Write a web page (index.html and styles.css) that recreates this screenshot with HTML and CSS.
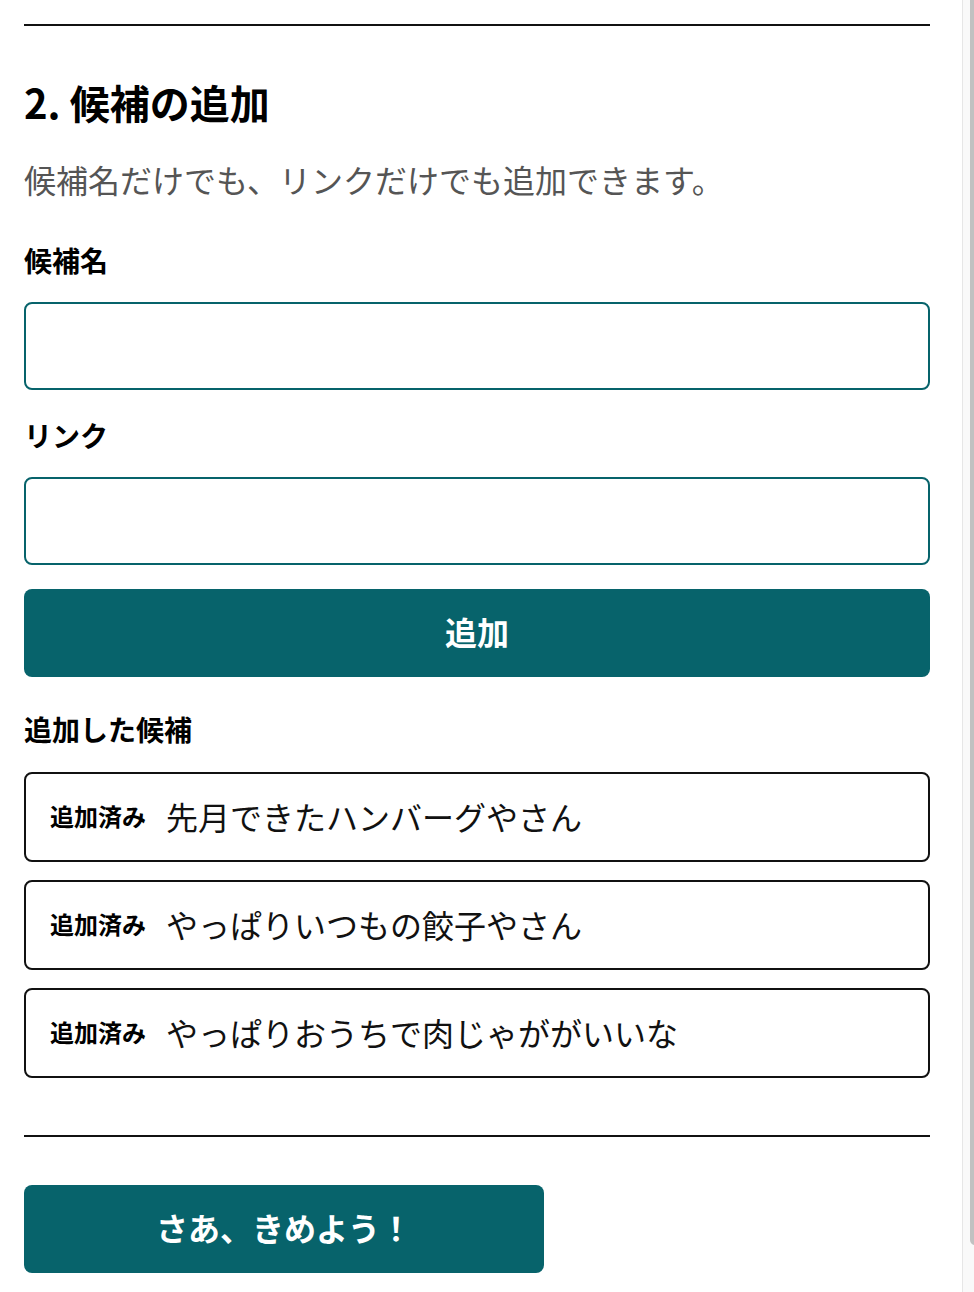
FILE: index.html
```html
<!DOCTYPE html>
<html lang="ja">
<head>
<meta charset="utf-8">
<title>候補の追加</title>
<link rel="stylesheet" href="styles.css">
</head>
<body>
<div class="scrollbar" aria-hidden="true"><div class="scrollbar-thumb"></div></div>
<main class="page">
  <hr class="rule">
  <section class="add">
    <h2 class="title">2. 候補の追加</h2>
    <p class="lead">候補名だけでも、リンクだけでも追加できます。</p>
    <label class="field-label" for="cand-name">候補名</label>
    <input class="field" id="cand-name" type="text">
    <label class="field-label field-label-2" for="cand-link">リンク</label>
    <input class="field" id="cand-link" type="text">
    <button class="btn btn-add" type="button">追加</button>
    <h3 class="field-label list-label">追加した候補</h3>
    <ul class="list">
      <li class="item"><span class="badge">追加済み</span><span class="item-name">先月できたハンバーグやさん</span></li>
      <li class="item"><span class="badge">追加済み</span><span class="item-name">やっぱりいつもの餃子やさん</span></li>
      <li class="item"><span class="badge">追加済み</span><span class="item-name">やっぱりおうちで肉じゃががいいな</span></li>
    </ul>
  </section>
  <hr class="rule rule-bottom">
  <button class="btn btn-go" type="button">さあ、きめよう！</button>
</main>
</body>
</html>
```

FILE: styles.css
```css
html, body {
  margin: 0;
  padding: 0;
  background: #ffffff;
  overflow: hidden;
}

body {
  font-family: "Noto Sans CJK JP", "Noto Sans", sans-serif;
  color: #111111;
}

.page {
  width: 906px;
  padding: 24px 0 0 24px;
  display: flex;
  flex-direction: column;
}

.rule {
  margin: 0;
  height: 0;
  border: 0;
  border-top: 2px solid #111111;
}

.add {
  display: flex;
  flex-direction: column;
}

.title {
  margin: 46px 0 0;
  font-size: 40px;
  line-height: 60px;
  font-weight: 700;
  color: #000000;
}

.lead {
  margin: 23px 0 0;
  font-size: 32px;
  line-height: 48px;
  color: #555555;
}

.field-label {
  display: block;
  margin: 36px 0 0;
  font-size: 28px;
  line-height: 42px;
  font-weight: 700;
  color: #000000;
}

.field-label-2 {
  margin-top: 24px;
}

.field {
  display: block;
  box-sizing: border-box;
  margin: 21px 0 0;
  width: 100%;
  height: 88px;
  padding: 0 20px;
  border: 2px solid #07636b;
  border-radius: 8px;
  background: #ffffff;
  font-family: inherit;
  font-size: 32px;
  outline: none;
}

.btn {
  display: block;
  box-sizing: border-box;
  height: 88px;
  border: 0;
  border-radius: 8px;
  background: #07636b;
  color: #ffffff;
  font-family: inherit;
  font-size: 32px;
  font-weight: 700;
  line-height: 84px;
  padding: 0 0 4px;
  cursor: pointer;
}

.btn-add {
  margin-top: 24px;
  width: 100%;
}

.list-label {
  margin-top: 31px;
}

.list {
  list-style: none;
  margin: 22px 0 0;
  padding: 0;
  display: flex;
  flex-direction: column;
  gap: 18px;
}

.item {
  box-sizing: border-box;
  height: 90px;
  display: flex;
  align-items: center;
  gap: 20px;
  padding: 0 24px 3px;
  border: 2px solid #111111;
  border-radius: 8px;
}

.badge {
  font-size: 24px;
  font-weight: 700;
  color: #000000;
}

.item-name {
  font-size: 32px;
  color: #111111;
}

.rule-bottom {
  margin-top: 57px;
}

.btn-go {
  margin-top: 48px;
  width: 520px;
}

.scrollbar {
  position: fixed;
  top: 0;
  right: 0;
  width: 11px;
  height: 100%;
  background: #f9f9f9;
  border-left: 1px solid #e6e6e6;
  overflow: hidden;
}

.scrollbar-thumb {
  position: absolute;
  left: 7px;
  top: -20px;
  width: 10px;
  height: 1265px;
  border-radius: 5px;
  background: #c1c1c1;
}
```
